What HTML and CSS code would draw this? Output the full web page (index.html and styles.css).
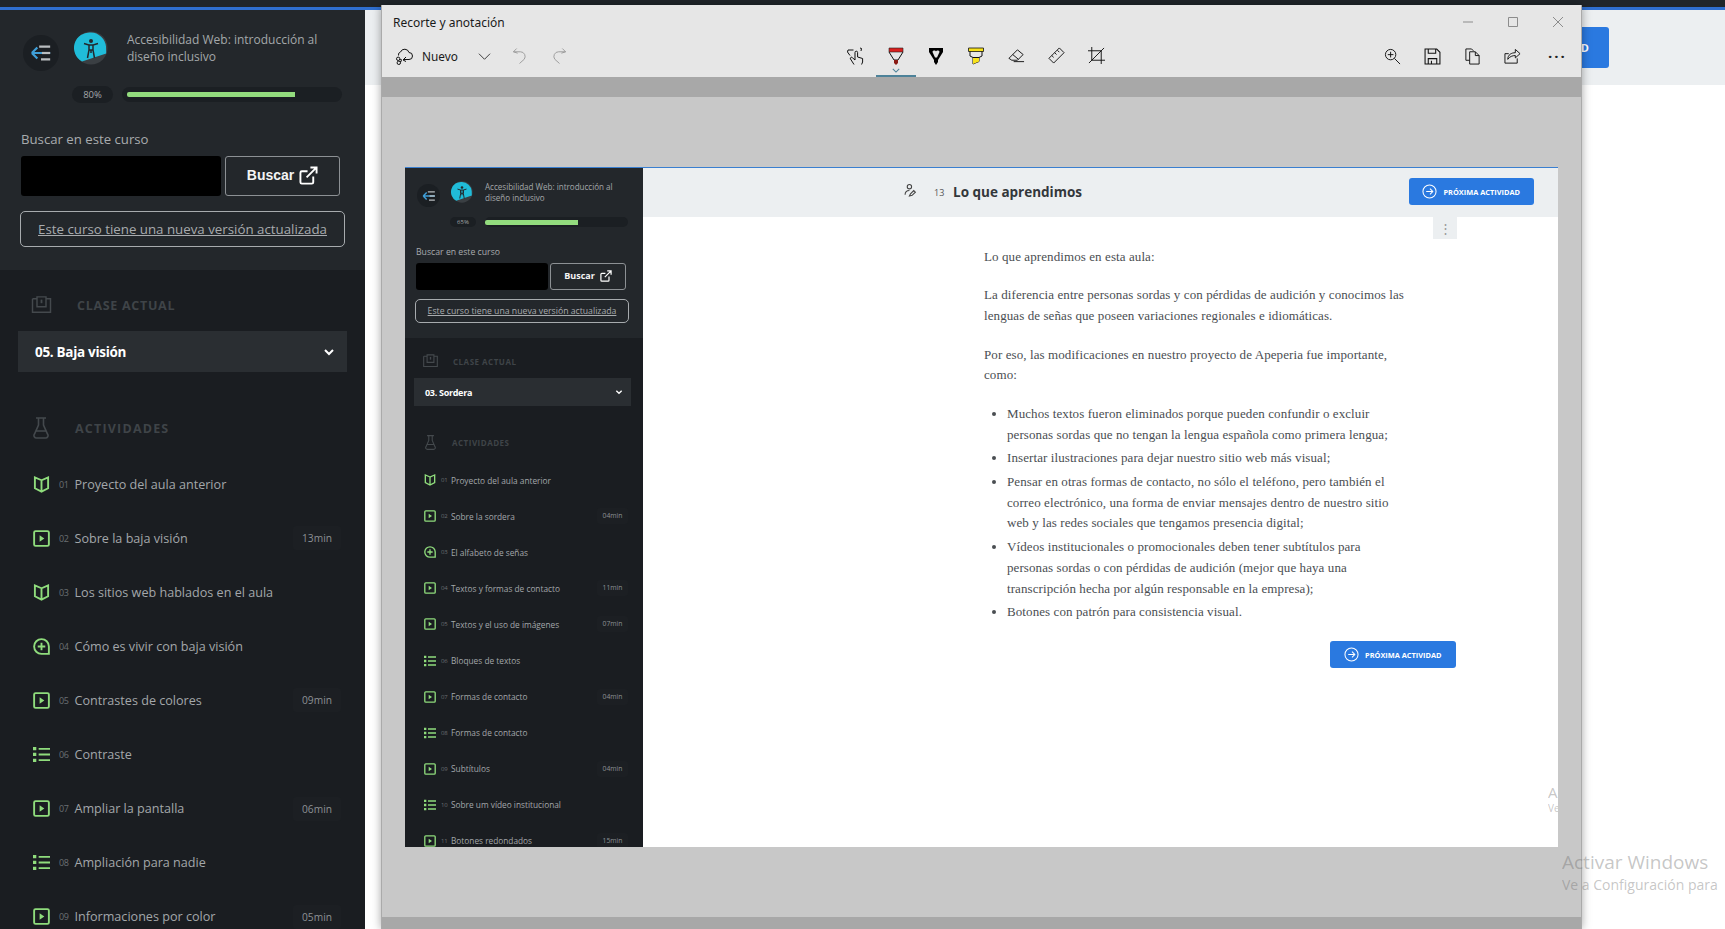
FILE: index.html
```html
<!DOCTYPE html>
<html lang="es">
<head>
  <meta charset="UTF-8">
  <meta name="viewport" content="width=device-width, initial-scale=1.0">
  <title>Recorte y anotación</title>
  <link rel="stylesheet" href="styles.css">
</head>
<body>
  <svg class="defs" width="0" height="0">
    <symbol id="i-back" viewBox="0 0 24 24"><path d="M2 12h20M2 12l6-6M2 12l6 6" fill="none" stroke="#3f9fd8" stroke-width="2.4"/><path d="M10 5h12M12 19h10" fill="none" stroke="#b9bdc0" stroke-width="2.4"/><path d="M13 12h9" stroke="#b9bdc0" stroke-width="2.4"/></symbol>
    <symbol id="i-logo" viewBox="0 0 34 34"><circle cx="17" cy="17" r="16.5" fill="#3a3f43"/><path d="M17 1.5a15.5 15.5 0 0 1 15 14l.2 7L8 30.5A15.5 15.5 0 0 1 17 1.5z" fill="#20bcd9"/><circle cx="17" cy="10" r="2" fill="#23272b"/><path d="M10 12.5l5 1.5v5l-1.5 8M24 12.5l-5 1.5v5l1.5 8M15 14h4v5h-4zM17 19v3" fill="none" stroke="#23272b" stroke-width="1.5"/></symbol>
    <symbol id="i-ext" viewBox="0 0 20 20"><path d="M15 11v6a1.5 1.5 0 0 1-1.5 1.5H3A1.5 1.5 0 0 1 1.5 17V7A1.5 1.5 0 0 1 3 5.5h6M12 1.5h6.5V8M18.5 1.5L8 12" fill="none" stroke="#fff" stroke-width="2"/></symbol>
    <symbol id="i-class" viewBox="0 0 22 20"><path d="M1 3h5M16 3h5v15H1V3M1 18h20M6 1h10v11H6z" fill="none" stroke="#44494d" stroke-width="1.6"/><path d="M11 4v4" stroke="#44494d" stroke-width="2"/></symbol>
    <symbol id="i-flask" viewBox="0 0 16 22"><path d="M3 1h10M5.5 1v7L1.5 17a2.5 2.5 0 0 0 2.3 4h8.4a2.5 2.5 0 0 0 2.3-4L10.5 8V1M3.5 14h9" fill="none" stroke="#44494d" stroke-width="1.6"/></symbol>
    <symbol id="i-book" viewBox="0 0 18 18"><path d="M9 4.5L2 1.5V13l7 3.5 7-3.5V1.5zM9 4.5v12" fill="none" stroke="#8fdc7c" stroke-width="2"/></symbol>
    <symbol id="i-play" viewBox="0 0 18 18"><rect x="1.2" y="1.2" width="15.6" height="15.6" rx="1.5" fill="none" stroke="#8fdc7c" stroke-width="2"/><path d="M7 5.5l5 3.5-5 3.5z" fill="#8fdc7c"/></symbol>
    <symbol id="i-plus" viewBox="0 0 18 18"><path d="M9 1.2a7.8 7.8 0 1 0 0 15.6h7.8V9A7.8 7.8 0 0 0 9 1.2z" fill="none" stroke="#8fdc7c" stroke-width="2"/><path d="M9 5v8M5 9h8" stroke="#8fdc7c" stroke-width="2"/></symbol>
    <symbol id="i-list" viewBox="0 0 18 18"><path d="M6 3h12M6 9h12M6 15h12" stroke="#8fdc7c" stroke-width="2"/><path d="M0 1h3.5v3.5H0zM0 7.2h3.5v3.5H0zM0 13.5h3.5V17H0z" fill="#8fdc7c"/></symbol>
    <symbol id="i-chev" viewBox="0 0 12 12"><path d="M2 4l4 4 4-4" fill="none" stroke="#fff" stroke-width="2"/></symbol>
    <symbol id="i-next" viewBox="0 0 16 16"><circle cx="8" cy="8" r="7" fill="none" stroke="#fff" stroke-width="1.1"/><path d="M4.5 8h7M8.5 5l3 3-3 3" fill="none" stroke="#fff" stroke-width="1.1"/></symbol>
  </svg>

  <div class="top-strip"></div>

  <div class="page">
    <aside class="sidebar">
      <div class="course-top">
        <div class="course-head">
          <span class="back-btn"><svg class="back-icon"><use href="#i-back"/></svg></span>
          <svg class="course-logo"><use href="#i-logo"/></svg>
          <p class="course-name">Accesibilidad Web: introducción al diseño inclusivo</p>
        </div>
        <div class="progress">
          <span class="progress-pill">80%</span>
          <div class="progress-track"><div class="progress-fill" style="width:80%"></div></div>
        </div>
        <p class="search-label">Buscar en este curso</p>
        <div class="search-row">
          <div class="search-input"></div>
          <div class="search-btn">Buscar <svg class="ext-icon"><use href="#i-ext"/></svg></div>
        </div>
        <a class="update-link"><span>Este curso tiene una nueva versión actualizada</span></a>
      </div>
      <div class="course-bottom">
        <div class="section-label"><svg class="section-icon"><use href="#i-class"/></svg><span>CLASE ACTUAL</span></div>
        <div class="class-select"><span>05. Baja visión</span><svg class="chev"><use href="#i-chev"/></svg></div>
        <div class="section-label activities"><svg class="section-icon flask"><use href="#i-flask"/></svg><span>ACTIVIDADES</span></div>
        <ul class="tasks">
          <li><svg class="task-icon"><use href="#i-book"/></svg><span class="task-num">01</span><span class="task-name">Proyecto del aula anterior</span></li>
          <li><svg class="task-icon"><use href="#i-play"/></svg><span class="task-num">02</span><span class="task-name">Sobre la baja visión</span><span class="task-time">13min</span></li>
          <li><svg class="task-icon"><use href="#i-book"/></svg><span class="task-num">03</span><span class="task-name">Los sitios web hablados en el aula</span></li>
          <li><svg class="task-icon"><use href="#i-plus"/></svg><span class="task-num">04</span><span class="task-name">Cómo es vivir con baja visión</span></li>
          <li><svg class="task-icon"><use href="#i-play"/></svg><span class="task-num">05</span><span class="task-name">Contrastes de colores</span><span class="task-time">09min</span></li>
          <li><svg class="task-icon"><use href="#i-list"/></svg><span class="task-num">06</span><span class="task-name">Contraste</span></li>
          <li><svg class="task-icon"><use href="#i-play"/></svg><span class="task-num">07</span><span class="task-name">Ampliar la pantalla</span><span class="task-time">06min</span></li>
          <li><svg class="task-icon"><use href="#i-list"/></svg><span class="task-num">08</span><span class="task-name">Ampliación para nadie</span></li>
          <li><svg class="task-icon"><use href="#i-play"/></svg><span class="task-num">09</span><span class="task-name">Informaciones por color</span><span class="task-time">05min</span></li>
        </ul>
      </div>
    </aside>
    <main class="content">
      <header class="content-head">
        <a class="next-btn big"><span>PRÓXIMA ACTIVIDAD</span></a>
      </header>
    </main>
  </div>

  <!-- ventana de recorte encima de la pagina -->
  <section class="snip-window">
    <div class="title-row">
      <span class="win-title">Recorte y anotación</span>
      <div class="win-controls">
        <svg width="12" height="12" viewBox="0 0 12 12"><path d="M1 6h10" stroke="#8c8c8c"/></svg>
        <svg width="12" height="12" viewBox="0 0 12 12"><path d="M1.5 1.5h9v9h-9z" fill="none" stroke="#8c8c8c"/></svg>
        <svg width="12" height="12" viewBox="0 0 12 12"><path d="M1 1l10 10M11 1L1 11" stroke="#8c8c8c"/></svg>
      </div>
    </div>
    <div class="tool-row">
      <div class="tools-left">
        <svg class="tool" viewBox="0 0 18 18"><path d="M3.5 8.5a3 3 0 0 1 2-3.5 4.5 4.500 0 0 1 8.500.5 3.500 3.500 0 0 1 0 7H8M8 13l3-3M8 13l3 1.500M7 13l-2.500-.5M7 13.500l-2 1.500" fill="none" stroke="#111"/><circle cx="3.2" cy="11.8" r="1.7" fill="none" stroke="#111"/><circle cx="3.8" cy="15.8" r="1.7" fill="none" stroke="#111"/></svg>
        <span class="nuevo">Nuevo</span>
        <svg class="tool chev-dark" viewBox="0 0 14 14"><path d="M1 4l6 6 6-6" fill="none" stroke="#333"/></svg>
        <svg class="tool undo" viewBox="0 0 16 18"><path d="M5 1L1.5 4.5 6 6M1.5 4.5H9a5 5 0 0 1 4 8L8 17" fill="none" stroke="#9a9a9a"/></svg>
        <svg class="tool redo" viewBox="0 0 16 18"><path d="M11 1l3.5 3.5L10 6M14.5 4.5H7a5 5 0 0 0-4 8L8 17" fill="none" stroke="#9a9a9a"/></svg>
      </div>
      <div class="tools-center">
        <div class="tool-cell"><svg class="tool" viewBox="0 0 18 18"><path d="M7 17.5L3.5 12a1.1 1.1 0 0 1 2-1.200L8 13V5.500a1.300 1.300 0 0 1 2.600 0V10l5 1.500V15l-1 2.500M1 3h5.500M1 3l-.5 2 2.500 3.500M13 1l1.500.5-.5 2.500" fill="none" stroke="#111"/></svg></div>
        <div class="tool-cell active"><svg class="tool" viewBox="0 0 16 18"><path d="M1 1h14v4H1z" fill="#d9201f"/><path d="M1 5l5 8h4l5-8" fill="none" stroke="#111"/><path d="M6 13h4v3l-2 2-2-2z" fill="#8a1a14"/><path d="M1 1h14v4H1z" fill="none" stroke="#222" stroke-width=".6"/></svg><svg class="active-chev" viewBox="0 0 10 6"><path d="M1 1l4 4 4-4" fill="none" stroke="#4d8299" stroke-width="1.3"/></svg></div>
        <div class="tool-cell"><svg class="tool" viewBox="0 0 16 18"><path d="M1 1h14v4l-5 8v2l-2 3-2-3v-2L1 5z" fill="#000"/><path d="M4.5 5c0-2 3-2 3.500-.5C8.500 3 11.500 3 11.500 5L9 10.500H7z" fill="#e6e6e6"/></svg></div>
        <div class="tool-cell"><svg class="tool" viewBox="0 0 18 18"><path d="M1.5 1h15v3.5h-15z" fill="#f7e21c" stroke="#111" stroke-width=".8"/><path d="M3 4.5V9l3 1.500v6.500l6-2.500v-4L15 9V4.500M6 10.500h6" fill="none" stroke="#111"/><path d="M6 11h6v3.500L6 17z" fill="#f7e21c"/></svg></div>
        <div class="tool-cell"><svg class="tool wide" viewBox="0 0 18 18"><path d="M1 12L10 3l6 5-6 6H4z" fill="none" stroke="#111"/><path d="M5 8l6 5M6 15.5h11" fill="none" stroke="#111"/></svg></div>
        <div class="tool-cell"><svg class="tool wide" viewBox="0 0 18 18"><path d="M1 12L12 1l5 5L6 17zM4 9l2 2M7 6l2 2M10 3.5l2 2" fill="none" stroke="#111"/></svg></div>
        <div class="tool-cell"><svg class="tool wide" viewBox="0 0 18 18"><path d="M4 0v14h14M0 4h14v14M1 17L17 1" fill="none" stroke="#111"/></svg></div>
      </div>
      <div class="tools-right">
        <svg class="tool wide" viewBox="0 0 18 18"><circle cx="7" cy="7" r="5.5" fill="none" stroke="#111"/><path d="M4 7h6M7 4v6M11 11l6 6" fill="none" stroke="#111"/></svg>
        <svg class="tool wide" viewBox="0 0 16 16"><path d="M1 1h11l3 3v11H1zM4 1v4h7V1M4 15v-5h8v5M7 12v3" fill="none" stroke="#111"/></svg>
        <svg class="tool wide" viewBox="0 0 16 18"><path d="M5 13H1V1h6l2 2M5 4h6l4 4v9H5zM11 4v4h4" fill="none" stroke="#111"/></svg>
        <svg class="tool wide" viewBox="0 0 18 18"><path d="M14 11v5H1V6h4M4 12c0-5 4-7 8-7V1.5L17 6l-5 4.5V8c-3 0-6 1-8 4z" fill="none" stroke="#111"/></svg>
        <span class="more">···</span>
      </div>
    </div>
    <div class="gray-band"></div>

    <div class="canvas">
      <div class="shot">
        <aside class="sidebar mini">
          <div class="course-top">
            <div class="course-head">
              <span class="back-btn"><svg class="back-icon"><use href="#i-back"/></svg></span>
              <svg class="course-logo"><use href="#i-logo"/></svg>
              <p class="course-name">Accesibilidad Web: introducción al diseño inclusivo</p>
            </div>
            <div class="progress">
              <span class="progress-pill">65%</span>
              <div class="progress-track"><div class="progress-fill" style="width:65%"></div></div>
            </div>
            <p class="search-label">Buscar en este curso</p>
            <div class="search-row">
              <div class="search-input"></div>
              <div class="search-btn">Buscar <svg class="ext-icon"><use href="#i-ext"/></svg></div>
            </div>
            <a class="update-link"><span>Este curso tiene una nueva versión actualizada</span></a>
          </div>
          <div class="course-bottom">
            <div class="section-label"><svg class="section-icon"><use href="#i-class"/></svg><span>CLASE ACTUAL</span></div>
            <div class="class-select"><span>03. Sordera</span><svg class="chev"><use href="#i-chev"/></svg></div>
            <div class="section-label activities"><svg class="section-icon flask"><use href="#i-flask"/></svg><span>ACTIVIDADES</span></div>
            <ul class="tasks">
              <li><svg class="task-icon"><use href="#i-book"/></svg><span class="task-num">01</span><span class="task-name">Proyecto del aula anterior</span></li>
              <li><svg class="task-icon"><use href="#i-play"/></svg><span class="task-num">02</span><span class="task-name">Sobre la sordera</span><span class="task-time">04min</span></li>
              <li><svg class="task-icon"><use href="#i-plus"/></svg><span class="task-num">03</span><span class="task-name">El alfabeto de señas</span></li>
              <li><svg class="task-icon"><use href="#i-play"/></svg><span class="task-num">04</span><span class="task-name">Textos y formas de contacto</span><span class="task-time">11min</span></li>
              <li><svg class="task-icon"><use href="#i-play"/></svg><span class="task-num">05</span><span class="task-name">Textos y el uso de imágenes</span><span class="task-time">07min</span></li>
              <li><svg class="task-icon"><use href="#i-list"/></svg><span class="task-num">06</span><span class="task-name">Bloques de textos</span></li>
              <li><svg class="task-icon"><use href="#i-play"/></svg><span class="task-num">07</span><span class="task-name">Formas de contacto</span><span class="task-time">04min</span></li>
              <li><svg class="task-icon"><use href="#i-list"/></svg><span class="task-num">08</span><span class="task-name">Formas de contacto</span></li>
              <li><svg class="task-icon"><use href="#i-play"/></svg><span class="task-num">09</span><span class="task-name">Subtítulos</span><span class="task-time">04min</span></li>
              <li><svg class="task-icon"><use href="#i-list"/></svg><span class="task-num">10</span><span class="task-name">Sobre um vídeo institucional</span></li>
              <li><svg class="task-icon"><use href="#i-play"/></svg><span class="task-num">11</span><span class="task-name">Botones redondados</span><span class="task-time">15min</span></li>
            </ul>
          </div>
        </aside>
        <div class="lesson">
          <div class="lesson-head">
            <svg class="lesson-icon" viewBox="0 0 12 12"><circle cx="5" cy="2.5" r="2" fill="none" stroke="#444"/><path d="M1 10c0-3 2-4 4-4M5 11l1-2 3-3 1.5 1.5-3 3z" fill="none" stroke="#444"/></svg>
            <span class="lesson-num">13</span>
            <h1 class="lesson-title">Lo que aprendimos</h1>
            <a class="next-btn top"><svg class="next-icon"><use href="#i-next"/></svg><span>PRÓXIMA ACTIVIDAD</span></a>
          </div>
          <div class="kebab">⋮</div>
          <article class="article">
            <p>Lo que aprendimos en esta aula:</p>
            <p>La diferencia entre personas sordas y con pérdidas de audición y conocimos las lenguas de señas que poseen variaciones regionales e idiomáticas.</p>
            <p>Por eso, las modificaciones en nuestro proyecto de Apeperia fue importante, como:</p>
            <ul>
              <li>Muchos textos fueron eliminados porque pueden confundir o excluir personas sordas que no tengan la lengua española como primera lengua;</li>
              <li>Insertar ilustraciones para dejar nuestro sitio web más visual;</li>
              <li>Pensar en otras formas de contacto, no sólo el teléfono, pero también el correo electrónico, una forma de enviar mensajes dentro de nuestro sitio web y las redes sociales que tengamos presencia digital;</li>
              <li>Vídeos institucionales o promocionales deben tener subtítulos para personas sordas o con pérdidas de audición (mejor que haya una transcripción hecha por algún responsable en la empresa);</li>
              <li>Botones con patrón para consistencia visual.</li>
            </ul>
          </article>
          <a class="next-btn bottom"><svg class="next-icon"><use href="#i-next"/></svg><span>PRÓXIMA ACTIVIDAD</span></a>
          <div class="watermark small"><b>Activar Windows</b><span>Ve a Configuración para</span></div>
        </div>
      </div>
    </div>
    <div class="gray-band thin"></div>
  </section>

  <div class="watermark"><b>Activar Windows</b><span>Ve a Configuración para</span></div>
</body>
</html>
```

FILE: styles.css
```css
* {
  box-sizing: border-box;
}
html, body {
  margin: 0;
  height: 929px;
  overflow: hidden;
  background: #fff;
  font-family: "Open Sans", "Noto Sans", sans-serif;
}
p, h1, ul {
  margin: 0;
  padding: 0;
}
.defs {
  position: absolute;
}
.top-strip {
  height: 10px;
  background: #20252a;
  border-bottom: 3px solid #2f6fd0;
}
.page {
  display: flex;
  height: 919px;
}

/* barra lateral */
.sidebar {
  flex: none;
  width: 365px;
  height: 100%;
  overflow: hidden;
  background: #1a1d21;
}
.course-top {
  height: 260px;
  padding-top: 25px;
  background: #23272b;
}
.course-head {
  display: flex;
  align-items: flex-start;
  padding-left: 23px;
}
.back-btn {
  flex: none;
  display: flex;
  align-items: center;
  justify-content: center;
  width: 36px;
  height: 36px;
  border-radius: 50%;
  background: #1b1f23;
}
.back-icon {
  width: 22px;
  height: 22px;
}
.course-logo {
  flex: none;
  width: 34px;
  height: 34px;
  margin: -4px 19px 0 15px;
}
.course-name {
  width: 205px;
  margin-top: -4px;
  font-size: 12px;
  line-height: 17px;
  color: #a3a7aa;
}
.progress {
  display: flex;
  align-items: center;
  gap: 9px;
  margin: 15px 0 0 72px;
}
.progress-pill {
  width: 41px;
  height: 17px;
  border-radius: 9px;
  background: #1b1f23;
  font-size: 9.5px;
  line-height: 17px;
  text-align: center;
  color: #a3a7aa;
}
.progress-track {
  display: flex;
  align-items: center;
  width: 220px;
  height: 15px;
  padding: 0 5px;
  border-radius: 8px;
  background: #1b1f23;
}
.progress-fill {
  height: 5px;
  background: #93dc7e;
  border-radius: 2px 0 0 2px;
}
.search-label {
  margin: 26px 0 0 21px;
  font-size: 13.2px;
  line-height: 20px;
  color: #a8abae;
}
.search-row {
  display: flex;
  gap: 4px;
  margin: 7px 0 0 21px;
}
.search-input {
  width: 200px;
  height: 40px;
  border-radius: 3px;
  background: #000;
}
.search-btn {
  display: flex;
  align-items: center;
  justify-content: center;
  gap: 5px;
  width: 115px;
  height: 40px;
  padding-bottom: 2px;
  border: 1px solid #8c9094;
  border-radius: 3px;
  font-family: "Liberation Sans", Arial, sans-serif;
  font-weight: 700;
  font-size: 14px;
  color: #f4f4f4;
}
.ext-icon {
  width: 19px;
  height: 19px;
}
.update-link {
  display: flex;
  align-items: center;
  justify-content: center;
  width: 325px;
  height: 36px;
  margin: 15px 0 0 20px;
  border: 1px solid #a7abae;
  border-radius: 5px;
  font-size: 13.3px;
  color: #a8abae;
  text-decoration: underline;
}
.course-bottom {
  padding-top: 26px;
}
.section-label {
  display: flex;
  align-items: center;
  height: 18px;
  padding-left: 31px;
  font-weight: 700;
  font-size: 12.5px;
  letter-spacing: .7px;
  color: #3f4448;
}
.section-icon {
  width: 21px;
  height: 18px;
  margin-right: 25px;
}
.activities {
  height: 22px;
  margin-top: 45px;
  padding-left: 33px;
  letter-spacing: 1.2px;
}
.flask {
  width: 16px;
  height: 22px;
  margin-right: 26px;
}
.class-select {
  display: flex;
  align-items: center;
  justify-content: space-between;
  width: 329px;
  height: 41px;
  margin: 17px 0 0 18px;
  padding: 0 12px 0 17px;
  background: #2a2e32;
  font-weight: 700;
  font-size: 13.5px;
  letter-spacing: -.3px;
  color: #fff;
}
.chev {
  width: 12px;
  height: 12px;
}
.tasks {
  margin-top: 18px;
  list-style: none;
}
.tasks li {
  display: flex;
  align-items: center;
  height: 54.1px;
  padding: 0 24px 0 33px;
}
.task-icon {
  flex: none;
  width: 17px;
  height: 17px;
  margin-right: 9px;
}
.task-num {
  width: 15.5px;
  font-size: 9px;
  letter-spacing: -.3px;
  color: #6a6f73;
}
.task-name {
  flex: 1;
  font-size: 12.6px;
  color: #a3a7aa;
  white-space: nowrap;
}
.task-time {
  width: 48px;
  height: 24px;
  border-radius: 3px;
  background: #1c1f23;
  font-size: 10.2px;
  line-height: 24px;
  text-align: center;
  color: #8d9195;
}

/* pagina detras de la ventana */
.content {
  flex: 1;
}
.content-head {
  display: flex;
  align-items: center;
  justify-content: flex-end;
  height: 75px;
  padding-right: 116px;
  background: #eceff1;
}
.next-btn {
  display: flex;
  align-items: center;
  border-radius: 3px;
  background: #2a79e0;
  font-weight: 700;
  color: #fff;
  white-space: nowrap;
}
.next-btn.big {
  height: 41px;
  padding: 0 20px 0 40px;
  font-size: 11px;
}

/* ventana recorte y anotacion */
.snip-window {
  position: absolute;
  left: 381px;
  top: 5px;
  width: 1201px;
  height: 924px;
  display: flex;
  flex-direction: column;
  background: #e6e6e6;
  border-left: 1px solid #aaa;
  border-right: 1px solid #aaa;
  box-shadow: 0 0 9px rgba(0, 0, 0, .35);
}
.title-row {
  display: flex;
  align-items: center;
  justify-content: space-between;
  height: 35px;
  padding: 0 17px 0 11px;
}
.win-title {
  font-family: "Noto Sans", sans-serif;
  font-size: 12px;
  color: #1a1a1a;
}
.win-controls {
  display: flex;
  gap: 33px;
  margin-top: -2px;
}
.tool-row {
  display: flex;
  align-items: flex-start;
  height: 37px;
  padding: 7px 0 0 13px;
}
.tool {
  flex: none;
  width: 18px;
  height: 18px;
}
.tools-left {
  display: flex;
  align-items: center;
  width: 441px;
}
.nuevo {
  margin-left: 9px;
  font-family: "Noto Sans", sans-serif;
  font-size: 11.8px;
  color: #1a1a1a;
}
.chev-dark {
  width: 13px;
  height: 13px;
  margin-left: 20px;
}
.undo {
  width: 15px;
  margin-left: 21px;
}
.redo {
  width: 15px;
  margin-left: 25px;
}
.tools-center {
  display: flex;
  width: 548px;
}
.tool-cell {
  position: relative;
  display: flex;
  justify-content: center;
  width: 40px;
  height: 30px;
}
.tool-cell.active {
  border-bottom: 2px solid #4d8299;
}
.active-chev {
  position: absolute;
  left: 16px;
  bottom: 2px;
  width: 8px;
  height: 5px;
}
.wide {
  width: 17px;
  height: 17px;
}
.tools-right {
  display: flex;
  align-items: center;
  gap: 23px;
}
.more {
  margin-left: 4px;
  font-size: 15px;
  line-height: 18px;
  font-weight: 700;
  letter-spacing: 2px;
  color: #222;
}
.gray-band {
  height: 20px;
  background: #a8a8a8;
}
.gray-band.thin {
  height: 12px;
}
.canvas {
  flex: 1;
  padding: 70px 0 0 23px;
  background: #c8c8c8;
}

/* captura dentro de la ventana */
.shot {
  display: flex;
  width: 1153px;
  height: 680px;
  overflow: hidden;
  background: #fff;
  border-top: 1px solid #3a7fd0;
}
.mini {
  width: 238px;
}
.mini .course-top {
  height: 170px;
  padding-top: 16px;
}
.mini .course-head {
  padding-left: 12px;
}
.mini .back-btn {
  width: 23px;
  height: 23px;
}
.mini .back-icon {
  width: 14px;
  height: 14px;
}
.mini .course-logo {
  width: 22px;
  height: 22px;
  margin: -3px 12px 0 11px;
}
.mini .course-name {
  width: 135px;
  font-size: 8.05px;
  line-height: 11px;
  margin-top: -3px;
}
.mini .progress {
  gap: 9px;
  margin: 10px 0 0 45px;
}
.mini .progress-pill {
  width: 26px;
  height: 10px;
  font-size: 6px;
  line-height: 10px;
}
.mini .progress-track {
  width: 143px;
  height: 10px;
  padding: 0;
}
.mini .progress-fill {
  height: 5px;
}
.mini .search-label {
  margin: 19px 0 0 11px;
  font-size: 8.7px;
  line-height: 13px;
}
.mini .search-row {
  gap: 2px;
  margin: 4px 0 0 11px;
}
.mini .search-input {
  width: 132px;
  height: 27px;
}
.mini .search-btn {
  width: 76px;
  height: 27px;
  gap: 5px;
  font-size: 9px;
  font-family: "Open Sans", sans-serif;
}
.mini .ext-icon {
  width: 12px;
  height: 12px;
}
.mini .update-link {
  width: 214px;
  height: 24px;
  margin: 9px 0 0 10px;
  font-size: 8.7px;
}
.mini .course-bottom {
  padding-top: 16px;
}
.mini .section-label {
  height: 14px;
  padding-left: 18px;
  font-size: 8px;
  letter-spacing: .5px;
}
.mini .section-icon {
  width: 15px;
  height: 14px;
  margin-right: 15px;
}
.mini .class-select {
  width: 217px;
  height: 28px;
  margin: 10px 0 0 9px;
  padding: 0 8px 0 11px;
  font-size: 9px;
}
.mini .chev {
  width: 8px;
  height: 8px;
}
.mini .activities {
  height: 19px;
  margin-top: 27px;
  padding-left: 20px;
}
.mini .flask {
  width: 11px;
  height: 19px;
  margin-right: 16px;
}
.mini .tasks {
  margin-top: 10px;
}
.mini .tasks li {
  height: 36.1px;
  padding: 0 15px 0 19px;
}
.mini .task-icon {
  width: 12px;
  height: 12px;
  margin-right: 5px;
}
.mini .task-num {
  width: 10px;
  font-size: 6px;
}
.mini .task-name {
  font-size: 8.3px;
}
.mini .task-time {
  width: 31px;
  height: 16px;
  font-size: 6.8px;
  line-height: 16px;
}
.lesson {
  position: relative;
  flex: 1;
  overflow: hidden;
}
.lesson-head {
  display: flex;
  align-items: center;
  height: 49px;
  padding-left: 261px;
  background: #eceff1;
}
.lesson-icon {
  width: 13px;
  height: 13px;
  margin: -5px 17px 0 0;
}
.lesson-num {
  width: 19px;
  font-size: 9px;
  color: #555;
}
.lesson-title {
  flex: 1;
  margin-top: -2px;
  font-size: 13.5px;
  font-weight: 700;
  color: #33373b;
}
.next-btn.top {
  height: 27px;
  margin: -2px 24px 0 0;
  padding: 0 14px 0 13px;
  font-size: 7.4px;
}
.next-icon {
  width: 15px;
  height: 15px;
  margin-right: 6px;
}
.kebab {
  position: absolute;
  left: 790px;
  top: 49px;
  width: 24px;
  height: 22px;
  background: #eceff1;
  font-size: 13px;
  line-height: 22px;
  text-align: center;
  color: #999;
}
.article {
  width: 430px;
  margin: 30px 0 0 341px;
  font-family: "Liberation Serif", serif;
  font-size: 13px;
  line-height: 20.9px;
  letter-spacing: .09px;
  color: #4a4e52;
}
.article p {
  margin-bottom: 17.4px;
}
.article ul {
  width: 423px;
  padding-left: 23px;
}
.article li {
  margin-bottom: 2.6px;
}
.next-btn.bottom {
  position: absolute;
  left: 687px;
  top: 473px;
  height: 27px;
  padding: 0 14px;
  font-size: 7.4px;
}

/* marca de agua de windows */
.watermark {
  position: absolute;
  left: 1562px;
  top: 849px;
  display: flex;
  flex-direction: column;
  width: 163px;
  overflow: hidden;
  white-space: nowrap;
  font-family: "Open Sans", sans-serif;
  color: rgba(110, 110, 110, .4);
}
.watermark b {
  font-weight: 400;
  font-size: 19px;
  line-height: 26px;
}
.watermark span {
  font-size: 14px;
  line-height: 20px;
}
.watermark.small {
  left: 905px;
  top: 615px;
  width: 200px;
}
.watermark.small b {
  font-size: 15px;
  line-height: 18px;
}
.watermark.small span {
  font-size: 10px;
  line-height: 14px;
}
```
